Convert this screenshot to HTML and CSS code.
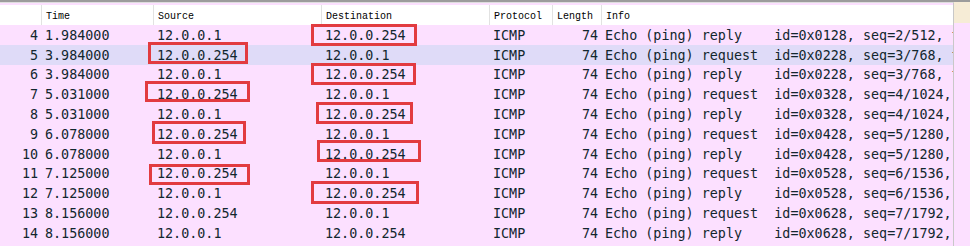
FILE: index.html
```html
<!DOCTYPE html>
<html>
<head>
<meta charset="utf-8">
<link rel="stylesheet" href="styles.css">
</head>
<body>
<div class="frame">
  <div class="list">
    <div class="row head">
      <div class="c no"></div>
      <div class="c">Time</div>
      <div class="c">Source</div>
      <div class="c">Destination</div>
      <div class="c">Protocol</div>
      <div class="c">Length</div>
      <div class="c info">Info</div>
    </div>
    <div class="row"><div class="c no">4</div><div class="c">1.984000</div><div class="c">12.0.0.1</div><div class="c">12.0.0.254</div><div class="c">ICMP</div><div class="c len">74</div><div class="c info">Echo (ping) reply    id=0x0128, seq=2/512, ttl=128</div></div>
    <div class="row sel"><div class="c no">5</div><div class="c">3.984000</div><div class="c">12.0.0.254</div><div class="c">12.0.0.1</div><div class="c">ICMP</div><div class="c len">74</div><div class="c info">Echo (ping) request  id=0x0228, seq=3/768, ttl=255</div></div>
    <div class="row"><div class="c no">6</div><div class="c">3.984000</div><div class="c">12.0.0.1</div><div class="c">12.0.0.254</div><div class="c">ICMP</div><div class="c len">74</div><div class="c info">Echo (ping) reply    id=0x0228, seq=3/768, ttl=128</div></div>
    <div class="row"><div class="c no">7</div><div class="c">5.031000</div><div class="c">12.0.0.254</div><div class="c">12.0.0.1</div><div class="c">ICMP</div><div class="c len">74</div><div class="c info">Echo (ping) request  id=0x0328, seq=4/1024, ttl=255</div></div>
    <div class="row"><div class="c no">8</div><div class="c">5.031000</div><div class="c">12.0.0.1</div><div class="c">12.0.0.254</div><div class="c">ICMP</div><div class="c len">74</div><div class="c info">Echo (ping) reply    id=0x0328, seq=4/1024, ttl=128</div></div>
    <div class="row"><div class="c no">9</div><div class="c">6.078000</div><div class="c">12.0.0.254</div><div class="c">12.0.0.1</div><div class="c">ICMP</div><div class="c len">74</div><div class="c info">Echo (ping) request  id=0x0428, seq=5/1280, ttl=255</div></div>
    <div class="row"><div class="c no">10</div><div class="c">6.078000</div><div class="c">12.0.0.1</div><div class="c">12.0.0.254</div><div class="c">ICMP</div><div class="c len">74</div><div class="c info">Echo (ping) reply    id=0x0428, seq=5/1280, ttl=128</div></div>
    <div class="row"><div class="c no">11</div><div class="c">7.125000</div><div class="c">12.0.0.254</div><div class="c">12.0.0.1</div><div class="c">ICMP</div><div class="c len">74</div><div class="c info">Echo (ping) request  id=0x0528, seq=6/1536, ttl=255</div></div>
    <div class="row"><div class="c no">12</div><div class="c">7.125000</div><div class="c">12.0.0.1</div><div class="c">12.0.0.254</div><div class="c">ICMP</div><div class="c len">74</div><div class="c info">Echo (ping) reply    id=0x0528, seq=6/1536, ttl=128</div></div>
    <div class="row"><div class="c no">13</div><div class="c">8.156000</div><div class="c">12.0.0.254</div><div class="c">12.0.0.1</div><div class="c">ICMP</div><div class="c len">74</div><div class="c info">Echo (ping) request  id=0x0628, seq=7/1792, ttl=255</div></div>
    <div class="row"><div class="c no">14</div><div class="c">8.156000</div><div class="c">12.0.0.1</div><div class="c">12.0.0.254</div><div class="c">ICMP</div><div class="c len">74</div><div class="c info">Echo (ping) reply    id=0x0628, seq=7/1792, ttl=128</div></div>

    <div class="mark" style="left:311px;top:21px;width:106px;height:22px"></div>
    <div class="mark" style="left:148px;top:39px;width:100px;height:22px"></div>
    <div class="mark" style="left:311px;top:60px;width:105px;height:22px"></div>
    <div class="mark" style="left:145px;top:78px;width:105px;height:21px"></div>
    <div class="mark" style="left:316px;top:99px;width:97px;height:22px"></div>
    <div class="mark" style="left:152px;top:118px;width:94px;height:23px"></div>
    <div class="mark" style="left:317px;top:137px;width:104px;height:22px"></div>
    <div class="mark" style="left:149px;top:161px;width:101px;height:21px"></div>
    <div class="mark" style="left:311px;top:178px;width:108px;height:23px"></div>
  </div>
  <div class="side">
    <div class="side-head"></div>
    <div class="side-body"></div>
  </div>
</div>
</body>
</html>
```
FILE: styles.css
```css
html, body {
  margin: 0;
  padding: 0;
  background: #fce0ff;
}
.frame {
  display: flex;
  width: 970px;
  height: 246px;
  overflow: hidden;
  border-top: 2px solid #9c9c9c;
  box-sizing: border-box;
}
.list {
  position: relative;
  width: 953px;
  flex: none;
  overflow: hidden;
  border-right: 1px solid #c8c8c8;
  padding-top: 2px;
  border-top: 1px solid #dedede;
}
.row {
  display: grid;
  grid-template-columns: 41px 112px 168px 168px 63px 49px 1fr;
  height: 19.8px;
  align-items: center;
  background: #fce0ff;
  color: #12272e;
  font-family: "DejaVu Sans Mono", monospace;
  font-size: 13.4px;
  white-space: pre;
}
.row.sel {
  background: #dfdbf8;
}
.row.head {
  background: #ffffff;
  color: #000;
  font-family: "Liberation Mono", monospace;
  font-size: 10px;
  height: 20px;
  align-items: stretch;
}
.row.head .c {
  border-left: 1px solid #e2e2e2;
  line-height: 22px;
  padding-left: 4px;
}
.row.head .c.no {
  border-left: none;
}
.c {
  overflow: hidden;
  padding-left: 4px;
  padding-top: 1px;
}
.c.no {
  text-align: right;
  padding-left: 0;
  padding-right: 3px;
}
.c.len {
  text-align: right;
  padding-right: 3px;
}
.row .c.info {
  padding-left: 4px;
}
.mark {
  position: absolute;
  border: 3px solid #e23b40;
  box-sizing: border-box;
}
.side {
  flex: 1;
  display: flex;
  flex-direction: column;
}
.side-head {
  height: 21px;
  background: #f6ecd6;
}
.side-body {
  flex: 1;
  background: #fce0ff;
}
```
